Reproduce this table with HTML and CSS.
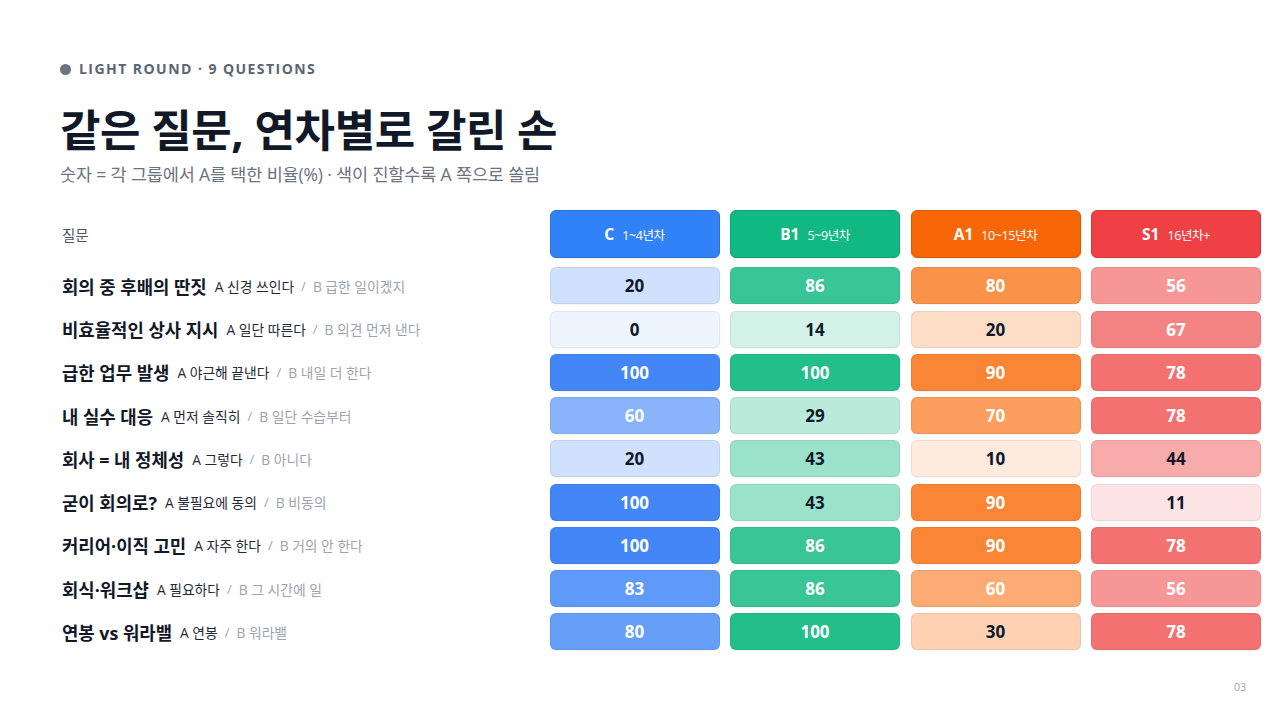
FILE: index.html
```html
<!DOCTYPE html>
<html lang="ko">
<head>
<meta charset="utf-8">
<link rel="stylesheet" href="styles.css">
</head>
<body>
<main class="slide">
  <div class="eyebrow"><span class="dot"></span>LIGHT ROUND · 9 QUESTIONS</div>
  <h1 class="title">같은 질문, 연차별로 갈린 손</h1>
  <p class="subtitle">숫자 = 각 그룹에서 A를 택한 비율(%) · 색이 진할수록 A 쪽으로 쏠림</p>

  <div class="table">
    <div class="th-label">질문</div>
    <div class="th c-c"><b>C</b><span>1~4년차</span></div>
    <div class="th c-b"><b>B1</b><span>5~9년차</span></div>
    <div class="th c-a"><b>A1</b><span>10~15년차</span></div>
    <div class="th c-s"><b>S1</b><span>16년차+</span></div>

    <div class="q"><strong>회의 중 후배의 딴짓</strong><span class="opt-a">A 신경 쓰인다</span><span class="sep">/</span><span class="opt-b">B 급한 일이겠지</span></div>
    <div class="cell c-c dark" style="--p:24%">20</div>
    <div class="cell c-b light" style="--p:83%">86</div>
    <div class="cell c-a light" style="--p:78%">80</div>
    <div class="cell c-s light" style="--p:56%">56</div>

    <div class="q"><strong>비효율적인 상사 지시</strong><span class="opt-a">A 일단 따른다</span><span class="sep">/</span><span class="opt-b">B 의견 먼저 낸다</span></div>
    <div class="cell c-c dark" style="--p:8%">0</div>
    <div class="cell c-b dark" style="--p:19%">14</div>
    <div class="cell c-a dark" style="--p:24%">20</div>
    <div class="cell c-s light" style="--p:66%">67</div>

    <div class="q"><strong>급한 업무 발생</strong><span class="opt-a">A 야근해 끝낸다</span><span class="sep">/</span><span class="opt-b">B 내일 더 한다</span></div>
    <div class="cell c-c light" style="--p:96%">100</div>
    <div class="cell c-b light" style="--p:92%">100</div>
    <div class="cell c-a light" style="--p:87%">90</div>
    <div class="cell c-s light" style="--p:76%">78</div>

    <div class="q"><strong>내 실수 대응</strong><span class="opt-a">A 먼저 솔직히</span><span class="sep">/</span><span class="opt-b">B 일단 수습부터</span></div>
    <div class="cell c-c light" style="--p:60%">60</div>
    <div class="cell c-b dark" style="--p:29%">29</div>
    <div class="cell c-a light" style="--p:69%">70</div>
    <div class="cell c-s light" style="--p:76%">78</div>

    <div class="q"><strong>회사 = 내 정체성</strong><span class="opt-a">A 그렇다</span><span class="sep">/</span><span class="opt-b">B 아니다</span></div>
    <div class="cell c-c dark" style="--p:24%">20</div>
    <div class="cell c-b dark" style="--p:42%">43</div>
    <div class="cell c-a dark" style="--p:14%">10</div>
    <div class="cell c-s dark" style="--p:45%">44</div>

    <div class="q"><strong>굳이 회의로?</strong><span class="opt-a">A 불필요에 동의</span><span class="sep">/</span><span class="opt-b">B 비동의</span></div>
    <div class="cell c-c light" style="--p:96%">100</div>
    <div class="cell c-b dark" style="--p:42%">43</div>
    <div class="cell c-a light" style="--p:87%">90</div>
    <div class="cell c-s dark" style="--p:14%">11</div>

    <div class="q"><strong>커리어·이직 고민</strong><span class="opt-a">A 자주 한다</span><span class="sep">/</span><span class="opt-b">B 거의 안 한다</span></div>
    <div class="cell c-c light" style="--p:96%">100</div>
    <div class="cell c-b light" style="--p:83%">86</div>
    <div class="cell c-a light" style="--p:87%">90</div>
    <div class="cell c-s light" style="--p:76%">78</div>

    <div class="q"><strong>회식·워크샵</strong><span class="opt-a">A 필요하다</span><span class="sep">/</span><span class="opt-b">B 그 시간에 일</span></div>
    <div class="cell c-c light" style="--p:81%">83</div>
    <div class="cell c-b light" style="--p:83%">86</div>
    <div class="cell c-a light" style="--p:60%">60</div>
    <div class="cell c-s light" style="--p:56%">56</div>

    <div class="q"><strong>연봉 vs 워라밸</strong><span class="opt-a">A 연봉</span><span class="sep">/</span><span class="opt-b">B 워라밸</span></div>
    <div class="cell c-c light" style="--p:78%">80</div>
    <div class="cell c-b light" style="--p:92%">100</div>
    <div class="cell c-a dark" style="--p:33%">30</div>
    <div class="cell c-s light" style="--p:76%">78</div>
  </div>

  <div class="page-num">03</div>
</main>
</body>
</html>
```

FILE: styles.css
```css
* { box-sizing: border-box; }

html, body {
  margin: 0;
  padding: 0;
  background: #ffffff;
}

body {
  font-family: "Open Sans", "Noto Sans CJK KR", "Noto Sans", sans-serif;
  color: #111827;
}

.slide {
  width: 1280px;
  height: 720px;
  padding: 59px 19px 0 60px;
  position: relative;
  display: flex;
  flex-direction: column;
}

.eyebrow {
  display: flex;
  align-items: center;
  gap: 8px;
  font-size: 14px;
  line-height: 20px;
  font-weight: 700;
  letter-spacing: 1.45px;
  color: #5b6472;
}

.dot {
  width: 11px;
  height: 11px;
  border-radius: 50%;
  background: #6b7280;
}

.title {
  margin: 24px 0 0;
  font-size: 44px;
  line-height: 54px;
  font-weight: 700;
  letter-spacing: -0.4px;
  color: #111827;
}

.subtitle {
  margin: 5px 0 0;
  font-size: 17.5px;
  line-height: 24px;
  color: #6b7280;
  letter-spacing: -0.15px;
}

.table {
  margin-top: 24px;
  display: grid;
  grid-template-columns: 1fr repeat(4, 170px);
  grid-template-rows: 51px repeat(9, 37px);
  column-gap: 10.5px;
  row-gap: 6.25px;
}

.c-c { --c: #3b82f6; --h: #3182f6; }
.c-b { --c: #10b981; --h: #10b981; }
.c-a { --c: #f97316; --h: #f76707; }
.c-s { --c: #ef4444; --h: #ef4044; }

.th-label {
  align-self: start;
  height: 48px;
  display: flex;
  align-items: center;
  padding-left: 2px;
  font-size: 14.5px;
  color: #4b5563;
}

.th {
  align-self: start;
  height: 48px;
  border-radius: 6px;
  background: var(--h);
  border: 1px solid color-mix(in srgb, var(--h) 88%, #000);
  color: #ffffff;
  display: flex;
  align-items: center;
  justify-content: center;
  gap: 8px;
  box-shadow: 0 1px 2px rgba(0, 0, 0, 0.08);
}

.th b {
  font-size: 15.5px;
  font-weight: 700;
}

.th span {
  font-size: 12.5px;
  letter-spacing: -0.4px;
}

.q {
  display: flex;
  align-items: center;
  padding-left: 2px;
  white-space: nowrap;
}

.q strong {
  font-size: 17.8px;
  font-weight: 700;
  color: #111827;
  margin-right: 8px;
}

.opt-a {
  font-size: 13.8px;
  color: #1f2937;
}

.sep {
  font-size: 13px;
  color: #9ca3af;
  margin: 0 7px 0 7px;
}

.opt-b {
  font-size: 13.8px;
  color: #9ca3af;
}

.cell {
  border-radius: 6px;
  background: color-mix(in srgb, var(--c) var(--p), #ffffff);
  border: 1px solid rgba(15, 23, 42, 0.07);
  box-shadow: 0 1px 2px rgba(15, 23, 42, 0.05);
  display: flex;
  align-items: center;
  justify-content: center;
  font-size: 17px;
  font-weight: 700;
}

.cell.dark { color: #0f172a; }
.cell.light { color: #ffffff; }

.page-num {
  position: absolute;
  right: 34px;
  bottom: 26px;
  font-size: 10.5px;
  color: #9ca3af;
}
```
